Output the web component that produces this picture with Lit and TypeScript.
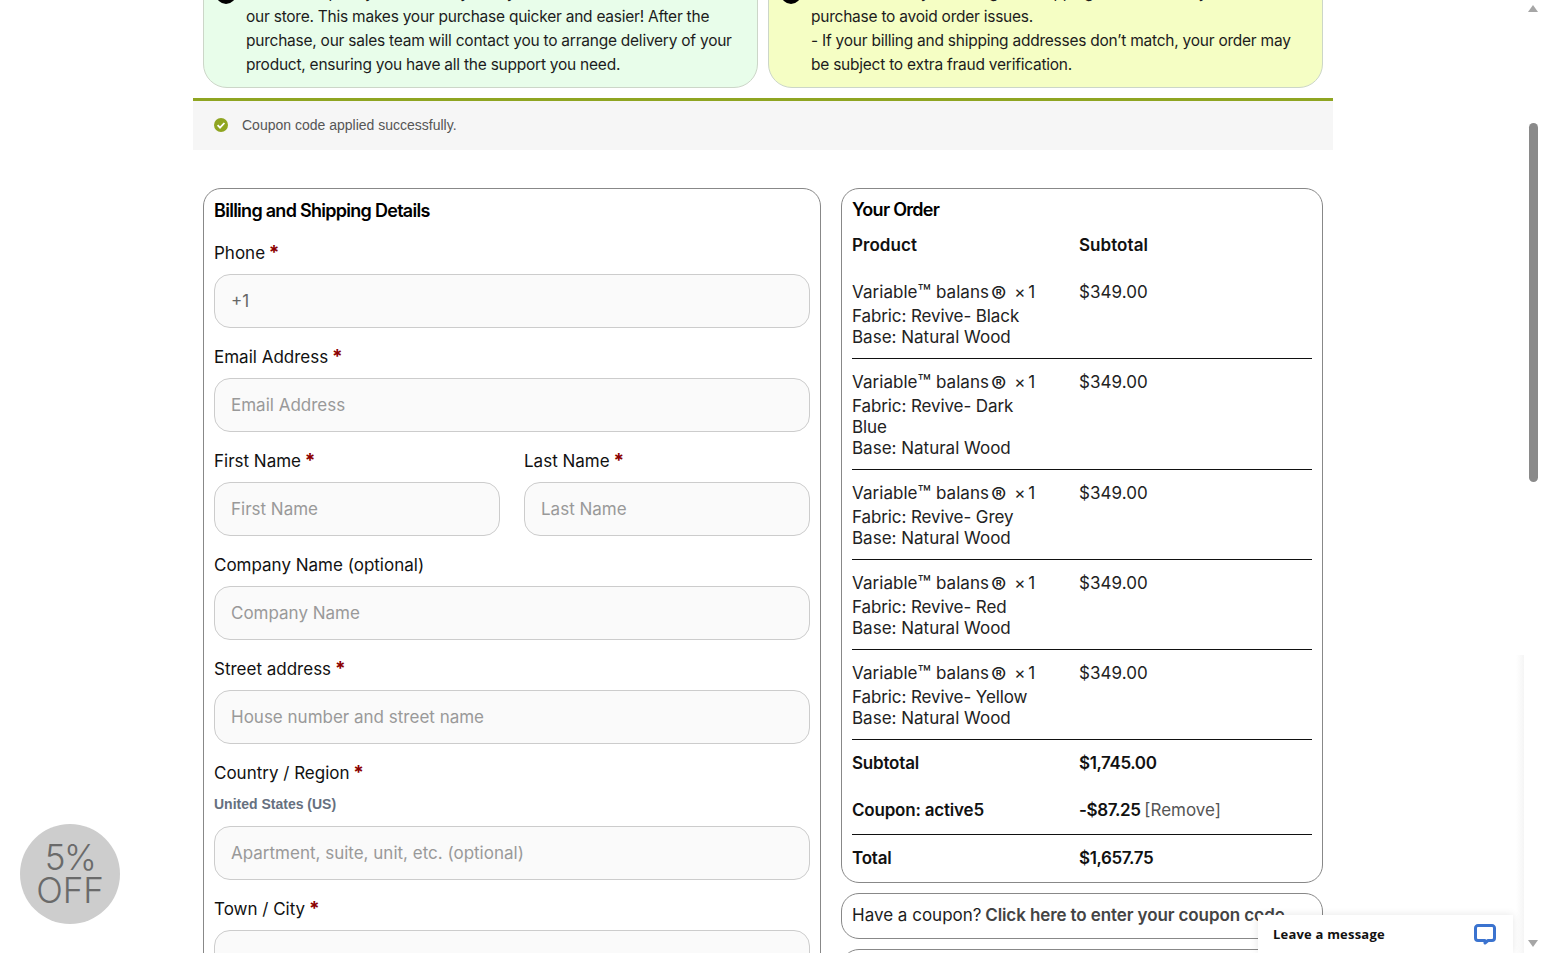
import { html, css, LitElement } from "lit";
import { customElement } from "lit/decorators.js";

const products = ["Black", "Dark Blue", "Grey", "Red", "Yellow"];

@customElement("app-root")
export class AppRoot extends LitElement {
  static styles = css`
    :host {
      display: block;
      height: 953px;
      overflow: hidden;
      position: relative;
      background: #fff;
      color: #1c1c1c;
      font-family: Inter, "Liberation Sans", sans-serif;
      font-size: 17px;
    }
    .page {
      width: 1140px;
      margin: -40px 0 0 193px;
    }
    .notices {
      display: flex;
      gap: 10px;
      padding: 0 10px;
    }
    .notice {
      flex: 1;
      height: 128px;
      box-sizing: border-box;
      border: 1px solid #ccd6c8;
      border-radius: 0 0 24px 24px;
      padding: 20px 10px 0 42px;
      font-size: 15.5px;
      line-height: 24px;
      letter-spacing: -0.24px;
      position: relative;
    }
    .notice.green {
      background: #e8fdea;
    }
    .notice.yellow {
      background: #f5fec4;
    }
    .dot {
      position: absolute;
      left: 12px;
      top: 23px;
      width: 20px;
      height: 20px;
      border-radius: 50%;
      background: #000;
    }
    .applied {
      margin-top: 10px;
      border-top: 3px solid #8fa521;
      background: #f6f6f6;
      height: 49px;
      box-sizing: content-box;
      display: flex;
      align-items: center;
      gap: 14px;
      padding: 0 0 0 21px;
      font-family: "Liberation Sans", sans-serif;
      font-size: 14px;
      color: #555;
    }
    .applied span {
      margin-top: -2px;
    }
    .applied svg {
      margin-top: -2px;
    }
    .cols {
      display: flex;
      gap: 20px;
      padding: 38px 10px 0;
      align-items: flex-start;
    }
    .card {
      border: 1px solid #888;
      border-radius: 18px;
      padding: 9px 10px 12px;
      box-sizing: border-box;
    }
    .form {
      width: 618px;
      height: 900px;
      padding-top: 10px;
    }
    .side {
      width: 482px;
      display: flex;
      flex-direction: column;
      gap: 10px;
    }
    h3 {
      margin: 0;
      font-size: 18px;
      line-height: 24px;
      font-weight: 600;
      letter-spacing: -0.72px;
      color: #000;
    }
    .grid {
      display: grid;
      grid-template-columns: 1fr 1fr;
      gap: 0 24px;
    }
    .field {
      display: flex;
      flex-direction: column;
      height: 104px;
      box-sizing: border-box;
      padding-top: 9px;
    }
    .field.first {
      height: 113px;
      padding-top: 18px;
    }
    .field.bare {
      height: auto;
    }
    .field.bare label {
      margin-bottom: 0;
    }
    label {
      line-height: 24px;
      margin-bottom: 9px;
      color: #111;
    }
    label i {
      color: #8b0000;
      font-style: normal;
      font-weight: 700;
      font-size: 19px;
      line-height: 0;
      margin-left: -1px;
    }
    .input {
      height: 54px;
      box-sizing: border-box;
      border: 1px solid #ccc;
      border-radius: 16px;
      background: #fafafa;
      padding-left: 16px;
      display: flex;
      align-items: center;
      color: #999;
    }
    .input.val {
      color: #666;
    }
    .input.gap {
      margin-bottom: 8px;
    }
    .country {
      font-family: "Liberation Sans", sans-serif;
      font-size: 14px;
      font-weight: 700;
      color: #66707f;
      margin: 11px 0 14px;
      line-height: 16px;
    }
    .row {
      display: grid;
      grid-template-columns: 227px 1fr;
      color: #222;
    }
    .head {
      font-weight: 600;
      margin: 11px 0 22px;
      line-height: 24px;
      letter-spacing: 0.05px;
      color: #111;
    }
    .item {
      line-height: 21px;
      padding-bottom: 10px;
      border-bottom: 1px solid #111;
      margin-bottom: 10px;
    }
    .item .desc {
      width: 190px;
    }
    .item .title {
      line-height: 27px;
      letter-spacing: 0.05px;
    }
    .tm {
      font-size: 1.3em;
      line-height: 0;
      vertical-align: -0.1em;
    }
    .reg {
      font-size: 1.35em;
      line-height: 0;
      vertical-align: -0.22em;
      margin-left: 2px;
    }
    .qty {
      margin-left: -2px;
      word-spacing: -2px;
    }
    .fabric {
      letter-spacing: -0.1px;
    }
    .total {
      font-weight: 600;
      line-height: 24px;
      letter-spacing: -0.2px;
      color: #111;
    }
    .total.sub {
      margin-top: 11px;
    }
    .total.off {
      margin: 23px 0 12px;
    }
    .total.line {
      border-top: 1px solid #111;
      padding-top: 11px;
    }
    .amount {
      letter-spacing: -0.4px;
    }
    .remove {
      font-weight: 400;
      color: #555;
      letter-spacing: 0;
    }
    .coupon {
      height: 46px;
      line-height: 24px;
    }
    .coupon b {
      font-weight: 600;
      color: #444;
      letter-spacing: -0.1px;
      margin-left: -1px;
    }
    .more {
      height: 40px;
    }
    .chat {
      position: absolute;
      left: 1258px;
      top: 915px;
      width: 255px;
      height: 38px;
      background: #fff;
      box-shadow: 0 0 8px rgba(0, 0, 0, 0.1);
      display: flex;
      align-items: center;
      justify-content: space-between;
      padding: 0 16px 0 15px;
      box-sizing: border-box;
      font-family: "Open Sans", sans-serif;
      font-size: 13px;
      font-weight: 700;
      letter-spacing: 0.2px;
      color: #111;
    }
    .badge {
      position: absolute;
      left: 20px;
      top: 824px;
      width: 100px;
      height: 100px;
      border-radius: 50%;
      background: #cdcdcd;
      color: #6a6a6a;
      display: flex;
      flex-direction: column;
      align-items: center;
      justify-content: center;
      font-size: 35px;
      font-weight: 300;
      line-height: 33px;
    }
    .badge .pct {
      letter-spacing: -1.5px;
    }
    .fade {
      position: absolute;
      left: 1516px;
      top: 655px;
      width: 8px;
      height: 298px;
      background: linear-gradient(to right, rgba(246, 246, 246, 0), #f5f5f5);
    }
    .scroll {
      position: absolute;
      right: 0;
      top: 0;
      width: 17px;
      height: 953px;
      background: #fff;
    }
    .thumb {
      position: absolute;
      left: 5px;
      top: 123px;
      width: 9px;
      height: 359px;
      border-radius: 5px;
      background: #8a8a8a;
    }
    .arrow {
      position: absolute;
      left: 4px;
      width: 0;
      height: 0;
      border-left: 5px solid transparent;
      border-right: 5px solid transparent;
    }
    .arrow.up {
      top: 5px;
      border-bottom: 7px solid #a6a6a6;
    }
    .arrow.down {
      bottom: 6px;
      border-top: 7px solid #a6a6a6;
    }
  `;

  field(name: string, placeholder: string, req = true, first = false) {
    return html`<div class="field ${first ? "first" : ""}">
      <label>${name}${req ? html` <i>*</i>` : ""}</label>
      <div class="input ${placeholder === "+1" ? "val" : ""}">${placeholder}</div>
    </div>`;
  }

  render() {
    return html`
      <div class="page">
        <div class="notices">
          <div class="notice green">
            <span class="dot"></span>
            Check out quickly and securely with your account details at<br />
            our store. This makes your purchase quicker and easier! After the<br />
            purchase, our sales team will contact you to arrange delivery of your<br />
            product, ensuring you have all the support you need.
          </div>
          <div class="notice yellow">
            <span class="dot"></span>
            - Please check your billing and shipping details before your<br />
            purchase to avoid order issues.<br />
            - If your billing and shipping addresses don’t match, your order may<br />
            be subject to extra fraud verification.
          </div>
        </div>
        <div class="applied">
          <svg width="14" height="14" viewBox="0 0 14 14">
            <circle cx="7" cy="7" r="7" fill="#8fa521" />
            <path d="M3.6 7.2l2.4 2.4 4.4-4.6" fill="none" stroke="#fff" stroke-width="1.8" />
          </svg>
          <span>Coupon code applied successfully.</span>
        </div>
        <div class="cols">
          <div class="card form">
            <h3>Billing and Shipping Details</h3>
            ${this.field("Phone", "+1", true, true)}
            ${this.field("Email Address", "Email Address")}
            <div class="grid">
              ${this.field("First Name", "First Name")} ${this.field("Last Name", "Last Name")}
            </div>
            ${this.field("Company Name (optional)", "Company Name", false)}
            ${this.field("Street address", "House number and street name")}
            <div class="field bare">
              <label>Country / Region <i>*</i></label>
            </div>
            <div class="country">United States (US)</div>
            <div class="input gap">Apartment, suite, unit, etc. (optional)</div>
            ${this.field("Town / City", "")}
          </div>
          <div class="side">
            <div class="card">
              <h3>Your Order</h3>
              <div class="row head"><span>Product</span><span>Subtotal</span></div>
              ${products.map(
                (color) => html`<div class="row item">
                  <div class="desc">
                    <div class="title">
                      Variable<span class="tm">™</span> balans<span class="reg">®</span>&nbsp;
                      <span class="qty">× 1</span>
                    </div>
                    <div class="fabric">Fabric: Revive- ${color}</div>
                    <div>Base: Natural Wood</div>
                  </div>
                  <div class="title">$349.00</div>
                </div>`
              )}
              <div class="row total sub">
                <span>Subtotal</span><span class="amount">$1,745.00</span>
              </div>
              <div class="row total off">
                <span>Coupon: active5</span>
                <span class="amount">-$87.25 <span class="remove">[Remove]</span></span>
              </div>
              <div class="row total line">
                <span>Total</span><span class="amount">$1,657.75</span>
              </div>
            </div>
            <div class="card coupon">Have a coupon? <b>Click here to enter your coupon code</b></div>
            <div class="card more"></div>
          </div>
        </div>
      </div>
      <div class="badge"><span class="pct">5%</span><span>OFF</span></div>
      <div class="fade"></div>
      <div class="chat">
        <span>Leave a message</span>
        <svg width="24" height="24" viewBox="0 0 24 24">
          <path
            d="M5 3.5h14a2.5 2.5 0 0 1 2.5 2.5v10a2.5 2.5 0 0 1-2.5 2.5h-4l-3 2.5v-2.5H5A2.5 2.5 0 0 1 2.5 16V6A2.5 2.5 0 0 1 5 3.5z"
            fill="#fff"
            stroke="#3b73cf"
            stroke-width="3"
            stroke-linejoin="round"
          />
        </svg>
      </div>
      <div class="scroll">
        <div class="arrow up"></div>
        <div class="thumb"></div>
        <div class="arrow down"></div>
      </div>
    `;
  }
}
